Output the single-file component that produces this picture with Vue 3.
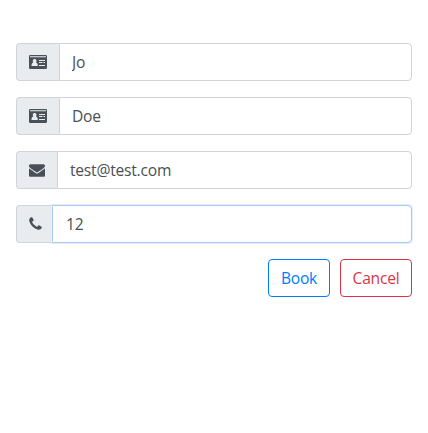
<script setup>
import { ref } from 'vue'

const fields = ref([
  { id: 'first', icon: 'card', value: 'Jo' },
  { id: 'last', icon: 'card', value: 'Doe' },
  { id: 'email', icon: 'mail', value: 'test@test.com' },
  { id: 'phone', icon: 'phone', value: '12', focused: true }
])
</script>

<template>
  <form class="form" @submit.prevent>
    <div v-for="field in fields" :key="field.id" class="group">
      <span class="addon" :class="field.icon">
        <svg v-if="field.icon === 'card'" width="18" height="16" viewBox="0 0 18 16">
          <path fill-rule="evenodd" d="M1.300 1h15.400q1.300 0 1.300 1.300v11.400q0 1.300-1.300 1.300H1.300Q0 15 0 13.700V2.300Q0 1 1.300 1zM1 3.200h16v-1H1zM2.500 12h6.300c0-2.200-.7-3.300-1.900-3.500 1.200-1.300.6-3.500-1.250-3.500S3.200 7.200 4.400 8.500C3.200 8.700 2.500 9.800 2.500 12zM10 6h6v1h-6zM10 8h3.500v1H10zM14.500 8H16v1h-1.500zM10 11h6v1h-6z" />
        </svg>
        <svg v-else-if="field.icon === 'mail'" width="16" height="16" viewBox="0 0 1792 1792">
          <path d="M1792 710v794q0 66-47 113t-113 47H160q-66 0-113-47T0 1504V710q44 49 101 87 362 246 497 345 57 42 92.500 65.500t94.500 48 110 24.500h2q51 0 110-24.500t94.500-48 92.500-65.500q170-123 498-345 57-39 100-87zm0-294q0 79-49 151t-122 123q-376 261-468 325-10 7-42.500 30.500t-54 38-52 32.500-57.500 27-50 9h-2q-23 0-50-9t-57.500-27-52-32.500-54-38T639 1015q-91-64-262-182.500T172 690q-62-42-117-115.500T0 438q0-78 41.500-130T160 256h1472q65 0 112.500 47t47.500 113z" />
        </svg>
        <svg v-else width="13" height="16" viewBox="0 0 1408 1792">
          <path d="M1408 1240q0 27-10 70.500t-21 68.500q-21 50-122 106-94 51-186 51-27 0-53-3.500t-57.500-12.500-47-14.500-55.500-20.500-49-18q-98-35-175-83-127-79-264-216T151 904Q103 827 68 729q-3-9-18-49t-20.500-55.500T15 577.500 2.500 520-1 467q0-92 51-186Q106 180 156 159q25-11 68.500-21t70.500-10q14 0 21 3 18 6 53 76 11 19 30 54t35 63.500 31 53.500q3 4 17.500 25t21.500 35.500 7 28.500q0 20-28.500 50t-62 55-62 53-28.500 46q0 9 5 22.500t8.500 20.500 14 24 11.500 19q76 137 174 235t235 174q2 1 19 11.500t24 14 20.500 8.500 22.500 5q18 0 46-28.500t53-62 55-62 50-28.500q14 0 28.500 7t35.500 21.500 25 17.500q25 15 53.500 31t63.500 35 54 30q70 35 76 53 3 7 3 21z" />
        </svg>
      </span>
      <input v-model="field.value" class="control" :class="{ focused: field.focused }" type="text" />
    </div>
    <div class="actions">
      <button class="btn book" type="button">Book</button>
      <button class="btn cancel" type="button">Cancel</button>
    </div>
  </form>
</template>

<style>
body {
  background: #fff;
}
</style>

<style scoped>
.form {
  padding: 43px 16px 0;
  font-family: "Open Sans", "Noto Sans", sans-serif;
}
.group {
  display: flex;
  height: 38px;
  margin-bottom: 16px;
}
.addon {
  box-sizing: border-box;
  display: flex;
  align-items: center;
  flex: none;
  width: 43px;
  padding-left: 12px;
  border: 1px solid #ced4da;
  border-right: 0;
  border-radius: 4px 0 0 4px;
  background: #e9ecef;
  color: #495057;
}
.addon.mail {
  width: 41px;
}
.addon.phone {
  width: 36px;
}
.addon svg {
  display: block;
  fill: currentColor;
}
.control {
  box-sizing: border-box;
  flex: 1;
  min-width: 0;
  padding: 0 12px;
  border: 1px solid #ced4da;
  border-radius: 0 4px 4px 0;
  outline: 0;
  background: #fff;
  color: #495057;
  font: 400 15.6px/24px "Open Sans", "Noto Sans", sans-serif;
  letter-spacing: -0.22px;
}
.control.focused {
  padding-left: 13px;
  border-color: #a9cbee;
  box-shadow: 0 0 0 1px #e0efff;
}
.actions {
  display: flex;
  justify-content: flex-end;
  gap: 10px;
}
.btn {
  box-sizing: border-box;
  height: 38px;
  padding: 0;
  border: 1px solid;
  border-radius: 4px;
  background: transparent;
  font: 400 15.6px/24px "Open Sans", "Noto Sans", sans-serif;
  letter-spacing: -0.22px;
}
.book {
  width: 62px;
  color: #007bff;
}
.cancel {
  width: 72px;
  color: #dc3545;
}
</style>
